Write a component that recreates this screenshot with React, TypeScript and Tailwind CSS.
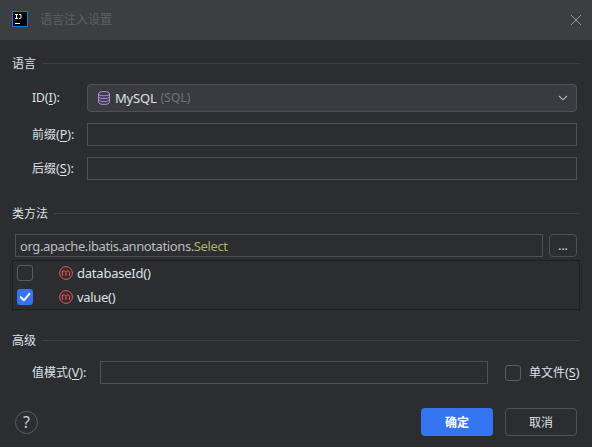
import type { ReactNode } from 'react';

function Section({ title, className = '' }: { title: string; className?: string }) {
  return (
    <div className={`flex h-4 items-center gap-[6px] pl-3 pr-3 ${className}`}>
      <span className="pt-[2px] leading-4">{title}</span>
      <div className="h-px flex-1 bg-[#3e4044]" />
    </div>
  );
}

function Label({ text, mnemonic, className }: { text: string; mnemonic: string; className: string }) {
  return (
    <label className={`shrink-0 whitespace-nowrap leading-4 ${className}`}>
      {text}<span className="text-[12.5px]">(<span className="underline underline-offset-2">{mnemonic}</span>):</span>
    </label>
  );
}

function Field({ className, children }: { className: string; children?: ReactNode }) {
  return <div className={`flex h-[23px] items-center border border-[#4e5157] ${className}`}>{children}</div>;
}

function Check({ checked = false }: { checked?: boolean }) {
  return checked ? (
    <span className="flex size-4 shrink-0 items-center justify-center rounded-[3px] bg-[#3574f0]">
      <svg width="16" height="16" viewBox="0 0 16 16" fill="none">
        <path d="M3.8 8.2 6.9 11.3 12.4 4.8" stroke="#fff" strokeWidth="2" strokeLinecap="round" strokeLinejoin="round" />
      </svg>
    </span>
  ) : (
    <span className="size-4 shrink-0 rounded-[3px] border border-[#5a5d63]" />
  );
}

function Method({ name, checked, className }: { name: string; checked?: boolean; className: string }) {
  return (
    <div className="flex h-6 items-center pl-1">
      <Check checked={checked} />
      <svg className="ml-[26px] mr-1 shrink-0" width="14" height="14" viewBox="0 0 14 14" fill="none">
        <circle cx="7" cy="7" r="6.4" fill="#402929" stroke="#db5c5c" />
        <path d="M3.5 9.8V4.6M3.5 6.4C3.5 4.4 7 4.4 7 6.4V9.8M7 6.4C7 4.4 10.5 4.4 10.5 6.4V9.8" stroke="#db5c5c" />
      </svg>
      <span className={`text-[13px] leading-4 ${className}`}>{name}</span>
    </div>
  );
}

export default function App() {
  return (
    <div className="h-[447px] w-[592px] overflow-hidden bg-[#2b2d30] font-['Noto_Sans','Noto_Sans_CJK_SC',sans-serif] text-[12px] text-[#dfe1e5]">
      <header className="flex h-10 items-center bg-[#3c3f41] pl-3 pr-[11px]">
        <svg className="mt-[-2px]" width="16" height="16" viewBox="0 0 16 16" fill="none">
          <rect x=".5" y=".5" width="15" height="15" fill="#000" stroke="#087cfa" />
          <path d="M3 3.5h3M4.5 3.5v4M3 7.5h3M7 3.5h2v3q0 1-1 1H7M3 12.5h5" stroke="#fff" />
        </svg>
        <span className="ml-3 flex-1 leading-4 text-[#5c5f62]">语言注入设置</span>
        <svg width="10" height="10" viewBox="0 0 10 10" stroke="#9b9d9e" strokeWidth=".9">
          <path d="M0 0 10 10M10 0 0 10" />
        </svg>
      </header>

      <Section title="语言" className="mt-[15px]" />
      <div className="mt-[13px] flex items-center pl-8 pr-[15px]">
        <Label text="ID" mnemonic="I" className="w-[55px]" />
        <div className="flex h-7 flex-1 items-center rounded-[4px] border border-[#4e5157] bg-[#393b40] pl-[10px] pr-2">
          <svg width="12" height="14" viewBox="0 0 12 14" fill="none" stroke="#b589ec">
            <ellipse cx="6" cy="2.7" rx="5.4" ry="2.1" />
            <path d="M.6 2.7v8.6c0 2.8 10.8 2.8 10.8 0V2.7M.6 5.6c0 2.8 10.8 2.8 10.8 0M.6 8.5c0 2.8 10.8 2.8 10.8 0" />
          </svg>
          <span className="ml-[5px] text-[13px] leading-4 tracking-[-0.2px]">MySQL</span>
          <span className="ml-1 flex-1 text-[12px] leading-4 tracking-[0.1px] text-[#6f737a]">(SQL)</span>
          <svg width="10" height="6" viewBox="0 0 10 6" fill="none" stroke="#b4b8bf" strokeWidth="1.1">
            <path d="M1 1 5 4.8 9 1" />
          </svg>
        </div>
      </div>
      <div className="mt-[11px] flex items-center pl-8 pr-[15px]">
        <Label text="前缀" mnemonic="P" className="w-[55px]" />
        <Field className="flex-1" />
      </div>
      <div className="mt-[11px] flex items-center pl-8 pr-[15px]">
        <Label text="后缀" mnemonic="S" className="w-[55px]" />
        <Field className="flex-1" />
      </div>

      <Section title="类方法" className="mt-[25px]" />
      <div className="mt-[13px] flex gap-[6px] pl-[15px] pr-[15px]">
        <Field className="flex-1 pl-1">
          <span className="text-[13px] leading-4 tracking-[-0.39px] text-[#bcbec4]">
            org.apache.ibatis.annotations.<span className="text-[#b3ae60]">Select</span>
          </span>
        </Field>
        <button className="flex h-[23px] w-7 items-center justify-center rounded-[4px] border border-[#4e5157] leading-4">...</button>
      </div>
      <div className="mx-3 mt-[3px] h-[50px] border border-[#1e1f22]">
        <Method name="databaseId()" className="tracking-[-0.22px]" />
        <Method name="value()" checked className="tracking-[-0.3px]" />
      </div>

      <Section title="高级" className="mt-[22px]" />
      <div className="mt-[13px] flex h-[23px] items-center pl-8">
        <Label text="值模式" mnemonic="V" className="w-[68px]" />
        <Field className="mr-[17px] w-[388px]" />
        <Check />
        <span className="ml-2 whitespace-nowrap leading-4">
          单文件<span className="text-[12.5px]">(<span className="underline underline-offset-2">S</span>)</span>
        </span>
      </div>

      <footer className="mt-6 flex items-center pl-[15px] pr-[15px]">
        <button className="flex size-[23px] items-center justify-center rounded-full border border-[#5a5d63] text-[16px] leading-none text-[#ced0d6]">?</button>
        <button className="ml-auto h-7 w-[72px] rounded-[4px] bg-[#3574f0] pt-px font-bold leading-4 text-white">确定</button>
        <button className="ml-3 h-7 w-[72px] rounded-[4px] border border-[#4e5157] pt-px leading-4">取消</button>
      </footer>
    </div>
  );
}
